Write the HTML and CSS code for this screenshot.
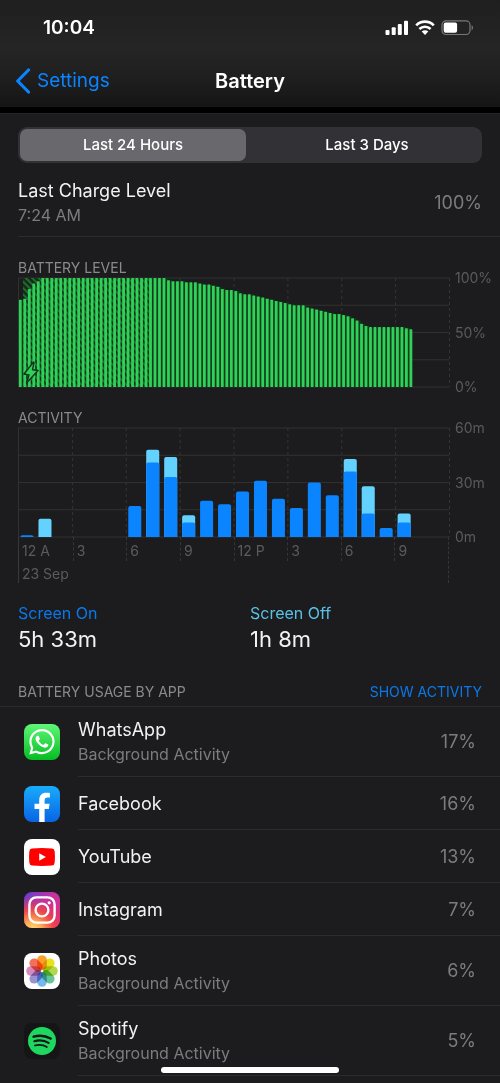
FILE: index.html
```html
<!DOCTYPE html>
<html lang="en">
<head>
<meta charset="utf-8">
<meta name="viewport" content="width=device-width, initial-scale=1">
<title>Battery</title>
<link rel="stylesheet" href="styles.css">
</head>
<body>
<header class="top">
  <div class="status">
    <time class="clock">10:04</time>
    <div class="indicators">
      <svg width="24" height="16" viewBox="0 0 24 16" fill="#fff" aria-label="Signal"><rect x="0.5" y="10" width="4" height="5" rx="1"/><rect x="6.7" y="7.3" width="4" height="7.7" rx="1"/><rect x="12.8" y="4" width="4" height="11" rx="1"/><rect x="19" y="0.7" width="4" height="14.3" rx="1"/></svg>
      <svg width="20" height="16" viewBox="0 0 20 16" aria-label="Wi-Fi"><g fill="none" stroke="#fff" stroke-width="2.6"><path d="M1.2 5.3a12.4 12.4 0 0 1 17.6 0"/><path d="M4.4 9a8 8 0 0 1 11.2 0"/></g><path d="M10 15l-3.3-3.4a4.7 4.7 0 0 1 6.6 0z" fill="#fff"/></svg>
      <svg width="33" height="16" viewBox="0 0 33 16" aria-label="Battery"><rect x="1" y="0.9" width="28" height="13.6" rx="4" fill="none" stroke="#77777a" stroke-width="1.2"/><rect x="2.7" y="2.6" width="13.4" height="10.2" rx="2" fill="#fff"/><path d="M30.6 5.3v5c1.9-.8 1.9-4.2 0-5z" fill="#77777a"/></svg>
    </div>
  </div>
  <nav class="nav">
    <a class="back" href="#">
      <svg width="16" height="26" viewBox="0 0 16 26" fill="none" stroke="#0a84ff" stroke-width="3.2" stroke-linecap="round" stroke-linejoin="round"><path d="M13.500 2L2.700 13 13.500 24"/></svg>
      <span>Settings</span>
    </a>
    <h1 class="title">Battery</h1>
  </nav>
</header>

<main class="panel">
  <div class="segments">
    <button class="segment selected" type="button" aria-pressed="true">Last 24 Hours</button>
    <button class="segment" type="button" aria-pressed="false">Last 3 Days</button>
  </div>

  <section class="charge">
    <div>
      <div class="name">Last Charge Level</div>
      <div class="detail">7:24 AM</div>
    </div>
    <div class="percent">100%</div>
  </section>

  <section class="chart">
    <h2 class="caption">BATTERY LEVEL</h2>
    <div class="body">
      <svg class="plot" id="level" viewBox="0 0 430 109" preserveAspectRatio="none">
        <defs>
          <pattern id="hatch" width="4.5" height="4.5" patternUnits="userSpaceOnUse" patternTransform="rotate(-45)"><rect width="4.5" height="4.5" fill="#142a19"/><rect width="2" height="4.5" fill="#1f6e2e"/></pattern>
        </defs>
      </svg>
      <div class="scale"><span>100%</span><span>50%</span><span>0%</span></div>
    </div>
  </section>

  <section class="chart activity">
    <h2 class="caption">ACTIVITY</h2>
    <div class="body">
      <svg class="plot" id="activity" viewBox="0 0 430 109" preserveAspectRatio="none"></svg>
      <div class="scale"><span>60m</span><span>30m</span><span>0m</span></div>
      <div class="axis">
        <div class="hours"><span>12 A</span><span>3</span><span>6</span><span>9</span><span>12 P</span><span>3</span><span>6</span><span>9</span></div>
        <div class="date">23 Sep</div>
      </div>
    </div>
  </section>

  <section class="totals">
    <div><div class="on">Screen On</div><div class="total">5h 33m</div></div>
    <div><div class="off">Screen Off</div><div class="total">1h 8m</div></div>
  </section>

  <section>
    <div class="usage-head">
      <h2 class="caption">BATTERY USAGE BY APP</h2>
      <button class="toggle" type="button">SHOW ACTIVITY</button>
    </div>
    <ul class="apps">
      <li class="app tall">
        <svg class="icon" viewBox="0 0 36 36"><defs><linearGradient id="wa" x2="0" y2="1"><stop stop-color="#5ff777"/><stop offset="1" stop-color="#06bc22"/></linearGradient></defs><rect width="36" height="36" rx="8" fill="url(#wa)"/><path transform="translate(5.2 5) scale(1.06)" fill="#fff" d="M17.472 14.382c-.297-.149-1.758-.867-2.03-.967-.273-.099-.471-.148-.67.15-.197.297-.767.966-.94 1.164-.173.199-.347.223-.644.075-.297-.15-1.255-.463-2.39-1.475-.883-.788-1.48-1.761-1.653-2.059-.173-.297-.018-.458.13-.606.134-.133.298-.347.446-.52.149-.174.198-.298.298-.497.099-.198.05-.371-.025-.52-.075-.149-.669-1.612-.916-2.207-.242-.579-.487-.5-.669-.51-.173-.008-.371-.01-.57-.01-.198 0-.52.074-.792.372-.272.297-1.04 1.016-1.04 2.479 0 1.462 1.065 2.875 1.213 3.074.149.198 2.096 3.2 5.077 4.487.709.306 1.262.489 1.694.625.712.227 1.36.195 1.871.118.571-.085 1.758-.719 2.006-1.413.248-.694.248-1.289.173-1.413-.074-.124-.272-.198-.57-.347m-5.421 7.403h-.004a9.87 9.87 0 01-5.031-1.378l-.361-.214-3.741.982.998-3.648-.235-.374a9.86 9.86 0 01-1.51-5.26c.001-5.45 4.436-9.884 9.888-9.884 2.64 0 5.122 1.03 6.988 2.898a9.825 9.825 0 012.893 6.994c-.003 5.45-4.437 9.884-9.885 9.884m8.413-18.297A11.815 11.815 0 0012.05 0C5.495 0 .16 5.335.157 11.892c0 2.096.547 4.142 1.588 5.945L.057 24l6.305-1.654a11.882 11.882 0 005.683 1.448h.005c6.554 0 11.89-5.335 11.893-11.893a11.821 11.821 0 00-3.48-8.413z"/></svg>
        <div class="info"><div><div class="name">WhatsApp</div><div class="detail">Background Activity</div></div><div class="percent">17%</div></div>
      </li>
      <li class="app">
        <svg class="icon" viewBox="0 0 36 36"><defs><linearGradient id="fb" x2="0" y2="1"><stop stop-color="#19acfc"/><stop offset="1" stop-color="#0864e4"/></linearGradient></defs><rect width="36" height="36" rx="8" fill="url(#fb)"/><path fill="#fff" d="M15.2 36V23h-4.7v-5.2h4.7v-3.6c0-4.8 2.7-7.4 7-7.4 1.4 0 2.6.1 3.7.3v4.5h-2.3c-2.2 0-3 1.3-3 2.9v3.3h5l-.8 5.2h-4.2v13z"/></svg>
        <div class="info"><div class="name">Facebook</div><div class="percent">16%</div></div>
      </li>
      <li class="app">
        <svg class="icon" viewBox="0 0 36 36"><rect width="36" height="36" rx="8" fill="#fff"/><path d="M8 9.5Q18 8.5 28 9.5Q30.4 9.7 30.7 12.5Q31.2 18 30.7 23.5Q30.4 26.3 28 26.6Q18 27.4 8 26.6Q5.6 26.3 5.3 23.5Q4.8 18 5.3 12.5Q5.6 9.7 8 9.5z" fill="#fe0000"/><path d="M15.2 14.3v7.4l6.7-3.7z" fill="#fff"/></svg>
        <div class="info"><div class="name">YouTube</div><div class="percent">13%</div></div>
      </li>
      <li class="app">
        <svg class="icon" viewBox="0 0 36 36"><defs><linearGradient id="ig1" x1="0" y1="0" x2="1" y2="1"><stop stop-color="#5b3fd0"/><stop offset=".45" stop-color="#c632a4"/><stop offset="1" stop-color="#e1306c"/></linearGradient><radialGradient id="ig2" cx=".25" cy="1.05" r=".95"><stop stop-color="#ffdc73"/><stop offset=".25" stop-color="#fdae55"/><stop offset=".6" stop-color="#f3483f" stop-opacity=".85"/><stop offset="1" stop-color="#e1306c" stop-opacity="0"/></radialGradient></defs><rect width="36" height="36" rx="8" fill="url(#ig1)"/><rect width="36" height="36" rx="8" fill="url(#ig2)"/><g fill="none" stroke="#fff" stroke-width="2.4"><rect x="5.4" y="5.4" width="25.2" height="25.2" rx="7"/><circle cx="18" cy="18" r="6.4"/></g><circle cx="25.2" cy="10.8" r="1.6" fill="#fff"/></svg>
        <div class="info"><div class="name">Instagram</div><div class="percent">7%</div></div>
      </li>
      <li class="app tall">
        <svg class="icon" viewBox="0 0 36 36"><rect width="36" height="36" rx="8" fill="#fff"/><g class="petals"><rect x="13.2" y="2.2" width="9.6" height="14.8" rx="4.8" fill="#fba02c"/><rect x="13.2" y="2.2" width="9.6" height="14.8" rx="4.8" fill="#ecdf1c" transform="rotate(45 18 18)"/><rect x="13.2" y="2.2" width="9.6" height="14.8" rx="4.8" fill="#b2d84e" transform="rotate(90 18 18)"/><rect x="13.2" y="2.2" width="9.6" height="14.8" rx="4.8" fill="#67c494" transform="rotate(135 18 18)"/><rect x="13.2" y="2.2" width="9.6" height="14.8" rx="4.8" fill="#76b7ec" transform="rotate(180 18 18)"/><rect x="13.2" y="2.2" width="9.6" height="14.8" rx="4.8" fill="#9a91d0" transform="rotate(225 18 18)"/><rect x="13.2" y="2.2" width="9.6" height="14.8" rx="4.8" fill="#d58bbd" transform="rotate(270 18 18)"/><rect x="13.2" y="2.2" width="9.6" height="14.8" rx="4.8" fill="#f4705a" transform="rotate(315 18 18)"/></g></svg>
        <div class="info"><div><div class="name">Photos</div><div class="detail">Background Activity</div></div><div class="percent">6%</div></div>
      </li>
      <li class="app tall">
        <svg class="icon" viewBox="0 0 36 36"><rect width="36" height="36" rx="8" fill="#151515"/><circle cx="18" cy="18" r="14" fill="#1ed760"/><g fill="none" stroke="#151515" stroke-linecap="round"><path d="M9.6 13.6c5.6-1.6 12-1 17 1.9" stroke-width="2.5"/><path d="M10.3 18.2c4.8-1.4 10.2-.8 14.3 1.7" stroke-width="2.1"/><path d="M10.9 22.5c4.1-1.1 8.5-.7 12 1.5" stroke-width="1.7"/></g></svg>
        <div class="info"><div><div class="name">Spotify</div><div class="detail">Background Activity</div></div><div class="percent">5%</div></div>
      </li>
    </ul>
  </section>
</main>
<div class="home-bar"></div>
<script src="charts.js"></script>
</body>
</html>
```

FILE: styles.css
```css
* {
  box-sizing: border-box;
}

body {
  margin: 0;
  min-height: 100vh;
  background: #1c1c1e;
  color: #f2f2f4;
  font-family: Inter, Roboto, "Liberation Sans", sans-serif;
  font-size: 16px;
  line-height: 20px;
}

h1,
h2,
ul {
  margin: 0;
  padding: 0;
  font-weight: 400;
  list-style: none;
}

button {
  border: 0;
  padding: 0;
  background: none;
  color: inherit;
  font: inherit;
}

svg {
  display: block;
  flex: none;
}

.top {
  background: linear-gradient(#1f1f1f, #252525 45%, #1e1e1e 75%, #151515);
  border-bottom: 6px solid #000;
}

.status {
  display: flex;
  justify-content: space-between;
  align-items: center;
  height: 54px;
  padding: 2px 26px 0 43px;
}

.clock {
  color: #fff;
  font-size: 19px;
  font-weight: 600;
}

.indicators {
  display: flex;
  gap: 6px;
}

.nav {
  display: grid;
  grid-template-columns: 1fr auto 1fr;
  align-items: center;
  height: 53px;
  padding: 0 15px;
}

.back {
  display: flex;
  align-items: center;
  gap: 6px;
  color: #0a84ff;
  font-size: 19px;
  text-decoration: none;
}

.title {
  color: #fff;
  font-size: 20px;
  font-weight: 600;
}

.panel {
  border-top: 1px solid #242426;
  padding-top: 13px;
}

.segments {
  display: grid;
  grid-template-columns: 1fr 1fr;
  gap: 8px;
  height: 36px;
  margin: 0 18px;
  padding: 2px;
  border-radius: 9px;
  background: #323135;
}

.segment {
  border-radius: 7px;
  color: #fff;
  font-size: 15px;
  font-weight: 500;
}

.segment.selected {
  background: #69686d;
}

.charge {
  display: flex;
  justify-content: space-between;
  align-items: center;
  height: 74px;
  margin-left: 18px;
  padding: 5px 18px 0 0;
  border-bottom: 1px solid #2c2c2e;
}

.name {
  padding-top: 2px;
  font-size: 18px;
  line-height: 24px;
}

.detail {
  color: #7c7c80;
  font-size: 16px;
  line-height: 24px;
}

.percent {
  padding-top: 1px;
  color: #7c7c80;
  font-size: 18px;
}

.caption {
  color: #8a8a8e;
  font-size: 14px;
  line-height: 20px;
}

.chart {
  padding: 21px 0 0 18px;
}

.body {
  display: grid;
  grid-template-columns: 1fr 51px;
}

.plot {
  width: 100%;
  height: 109px;
  overflow: visible;
}

.level-bar {
  fill: #30d158;
}

.gap-fill {
  fill: #123a1d;
}

.line {
  stroke: #303032;
}

.dashed {
  stroke: #353537;
  stroke-dasharray: 3 3;
}

.on-bar {
  fill: #0a84ff;
}

.off-bar {
  fill: #64d2ff;
}

.scale {
  display: flex;
  flex-direction: column;
  justify-content: space-between;
  margin: -10px 0;
  padding-left: 6px;
  color: #5b5b5f;
  font-size: 14px;
}

.axis {
  height: 46px;
  border-left: 1px solid #38383a;
  border-right: 1px dashed #353537;
  color: #5b5b5f;
  font-size: 14px;
}

.hours {
  display: grid;
  grid-template-columns: repeat(8, 1fr);
}

.hours span {
  height: 24px;
  padding: 4px 0 0 3px;
  border-left: 1px dashed #353537;
}

.hours span:first-child {
  border-left: 0;
}

.date {
  padding: 3px 0 0 3px;
}

.totals {
  display: grid;
  grid-template-columns: 1fr 1fr;
  padding: 18px 0 0 18px;
  margin-right: 18px;
}

.on,
.off {
  color: #0a78ea;
  font-size: 16px;
  line-height: 24px;
}

.off {
  color: #5ac1e6;
}

.total {
  font-size: 22px;
  line-height: 28px;
}

.usage-head {
  display: flex;
  justify-content: space-between;
  align-items: center;
  padding: 29px 18px 4px;
  border-bottom: 1px solid #2a2a2c;
}

.toggle {
  color: #0a78ea;
  font-size: 14px;
}

.app {
  display: flex;
  align-items: center;
  gap: 18px;
  height: 53px;
  padding-left: 24px;
}

.app.tall {
  height: 70px;
}

.app.tall .name {
  padding-top: 0;
}

.icon {
  width: 36px;
  height: 36px;
}

.petals {
  isolation: isolate;
}

.petals rect {
  mix-blend-mode: multiply;
}

.info {
  display: flex;
  flex: 1;
  justify-content: space-between;
  align-items: center;
  height: 100%;
  padding-right: 24px;
  border-bottom: 1px solid #2c2c2e;
}

.home-bar {
  position: fixed;
  bottom: 10px;
  left: 50%;
  width: 178px;
  height: 6px;
  margin-left: -89px;
  border-radius: 3px;
  background: #fff;
}
```

FILE: charts.js
```js
const NS = "http://www.w3.org/2000/svg";
const WIDTH = 430;
const HEIGHT = 109;

function add(svg, tag, attrs) {
  const el = document.createElementNS(NS, tag);
  for (const key in attrs) el.setAttribute(key, attrs[key]);
  svg.appendChild(el);
  return el;
}

function drawGrid(svg) {
  for (let i = 0; i <= 4; i++) {
    const y = (HEIGHT * i) / 4;
    add(svg, "line", { x1: 0, x2: WIDTH, y1: y, y2: y, class: "line" });
  }
  for (let i = 0; i <= 8; i++) {
    const x = (WIDTH * i) / 8 + 0.5;
    add(svg, "line", { x1: x, x2: x, y1: 0, y2: HEIGHT, class: i ? "dashed" : "line" });
  }
}

// Charge percentage for every quarter of an hour.
const levels = [80, 81, 90, 95, 97]
  .concat(Array(28).fill(100))
  .concat([98, 97, 97, 97, 96, 96, 96, 95, 94, 94, 93, 92, 90, 89, 89, 88, 86, 85, 85,
    84, 83, 82, 81, 80, 79, 78, 77, 76, 75, 75, 75, 73, 72, 71, 70, 69, 68, 67, 67,
    66, 65, 63, 61, 58, 56, 55, 55, 55, 55, 55, 55, 55, 55, 54, 53]);

function drawLevels(svg) {
  const step = WIDTH / 96;
  drawGrid(svg);
  levels.forEach((value, i) => {
    const h = (value / 100) * HEIGHT;
    if (i < levels.length - 1) {
      add(svg, "rect", { x: i * step + 3, y: HEIGHT - h, width: 3, height: h, class: "gap-fill" });
    }
  });
  add(svg, "rect", { x: step + 0.5, y: 0, width: step * 28.6, height: HEIGHT, fill: "url(#hatch)" });
  levels.forEach((value, i) => {
    const h = (value / 100) * HEIGHT;
    add(svg, "rect", { x: i * step + 0.9, y: HEIGHT - h, width: 2.8, height: h, rx: 0.6, class: "level-bar" });
  });
  add(svg, "path", {
    d: "M15.5 84L6 96l5 1-2.500 8L20 92.500l-5.500-.8 1.500-7.200z",
    fill: "#30d158", stroke: "#12351b", "stroke-width": 1.4, "stroke-linejoin": "round"
  });
}

// Minutes per hour: [screen on, screen off].
const minutes = [[1, 0], [0, 10], [0, 0], [0, 0], [0, 0], [0, 0], [17, 0], [41, 7], [33, 11],
  [8, 4], [20, 0], [18, 0], [25, 0], [31, 0], [21, 0], [16, 0], [30, 0], [23, 0],
  [36, 7], [13, 15], [5, 0], [8, 5]];

function topRounded(x, y, w, h) {
  const r = Math.min(2, h);
  return `M${x} ${y + h}v${r - h}q0 ${-r} ${r} ${-r}h${w - 2 * r}q${r} 0 ${r} ${r}v${h - r}z`;
}

function drawMinutes(svg) {
  const step = WIDTH / 24;
  drawGrid(svg);
  minutes.forEach(([on, off], i) => {
    const x = i * step + 2.5;
    const onHeight = (on / 60) * HEIGHT;
    const all = ((on + off) / 60) * HEIGHT;
    if (off) add(svg, "path", { d: topRounded(x, HEIGHT - all, 13, all), class: "off-bar" });
    if (on) add(svg, "path", { d: topRounded(x, HEIGHT - onHeight, 13, onHeight), class: "on-bar" });
  });
}

drawLevels(document.getElementById("level"));
drawMinutes(document.getElementById("activity"));
```
